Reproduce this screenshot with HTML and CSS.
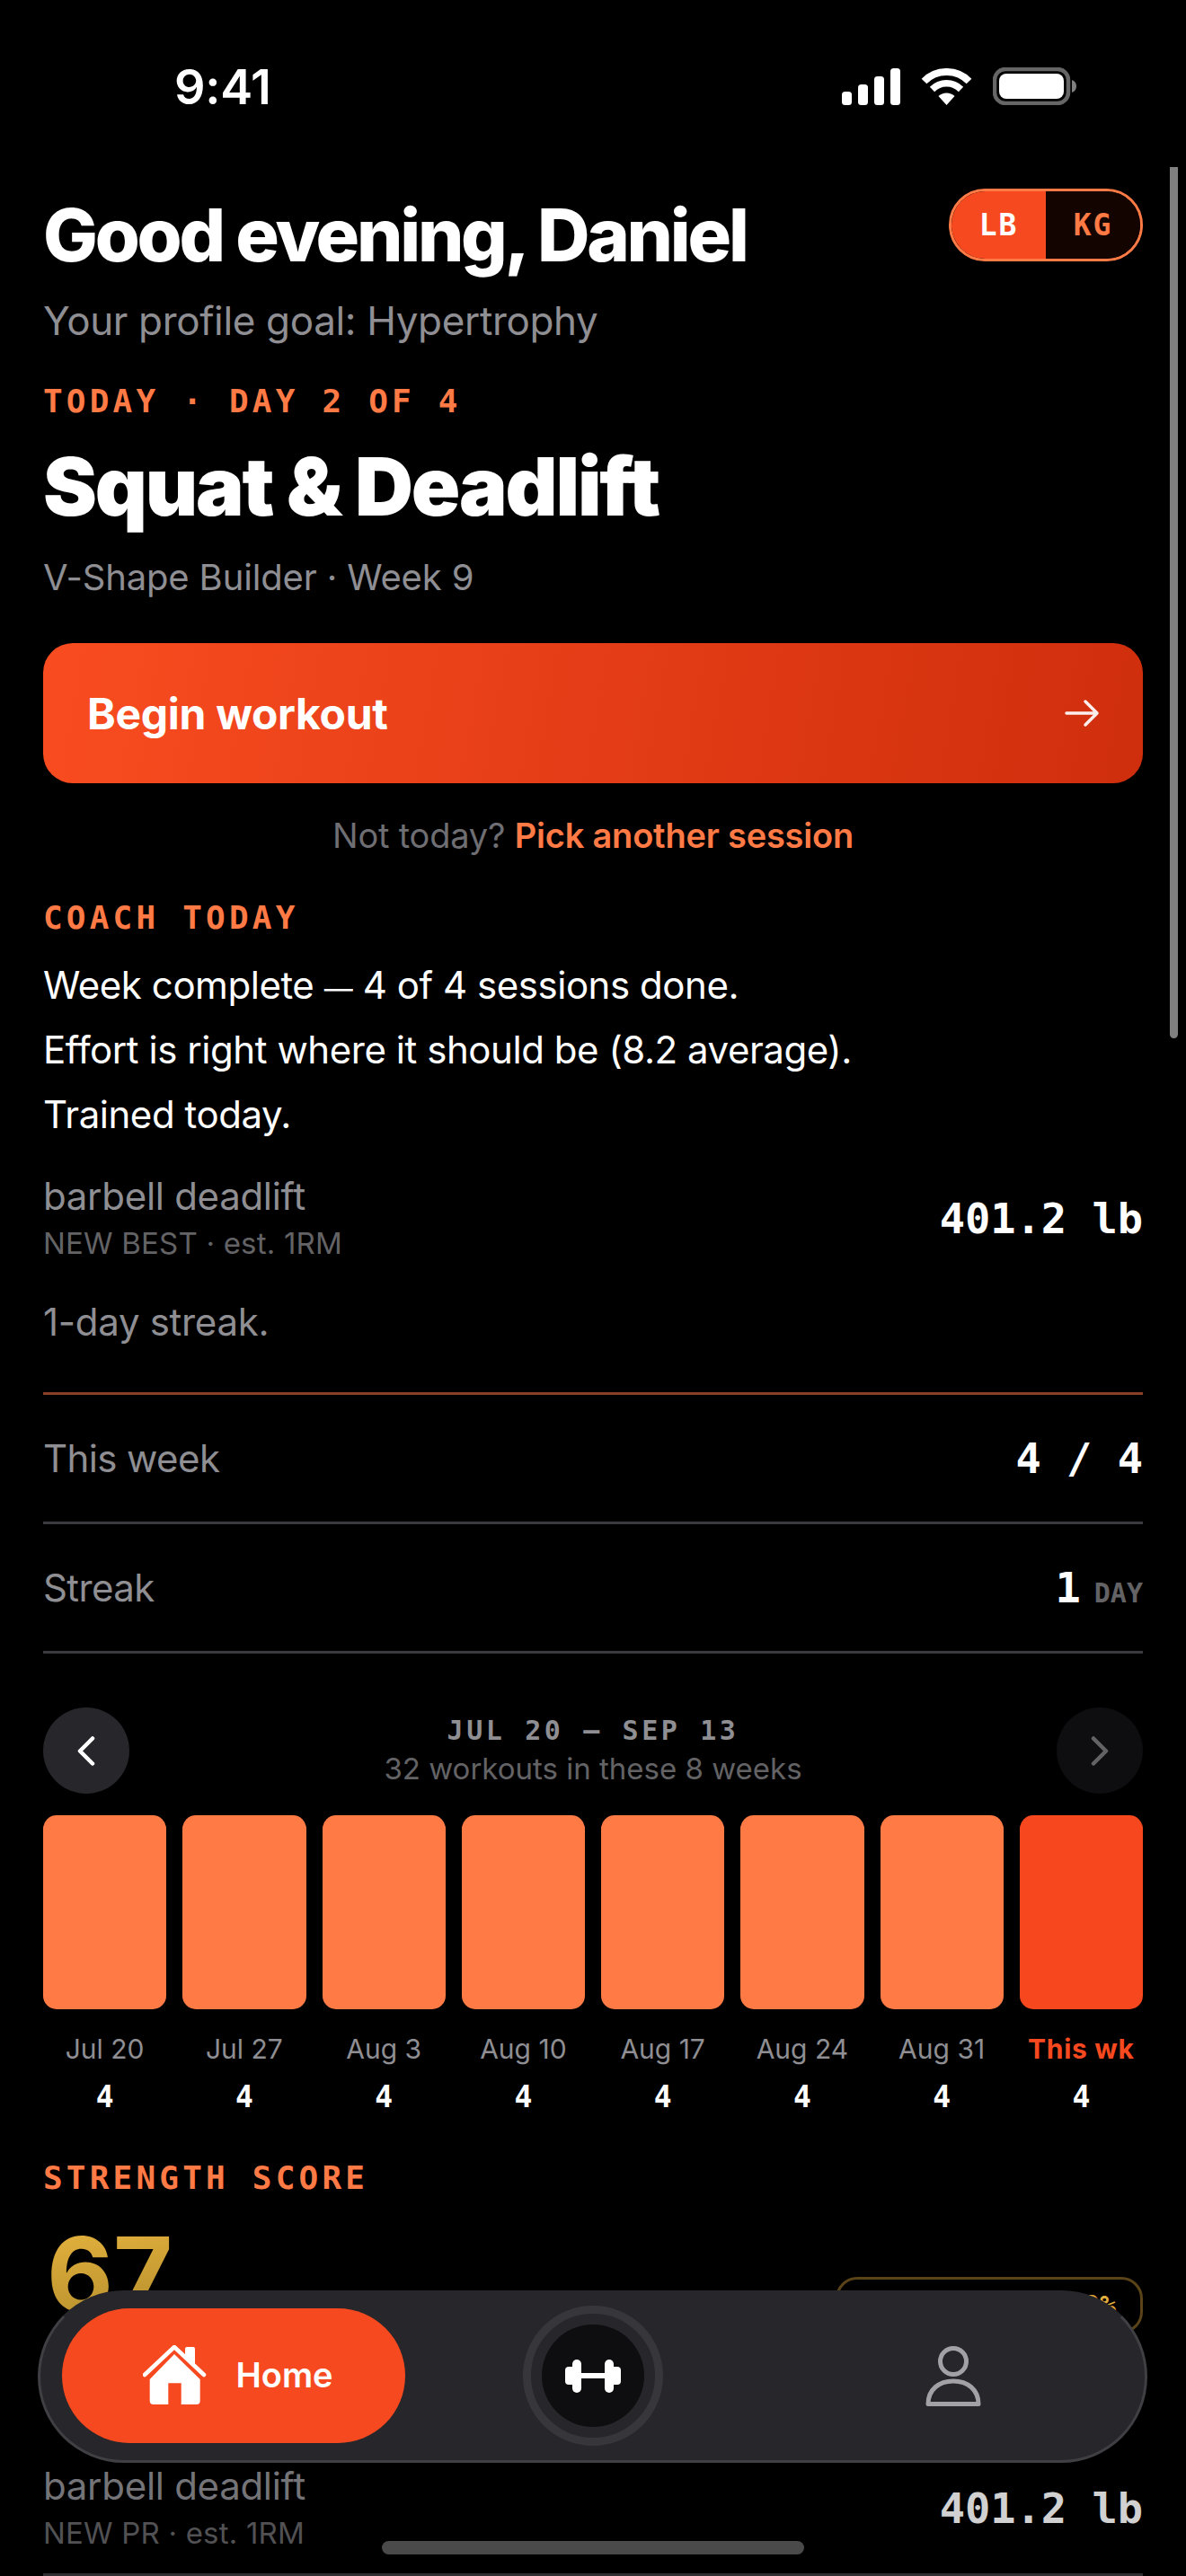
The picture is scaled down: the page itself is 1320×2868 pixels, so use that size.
FILE: index.html
```html
<!DOCTYPE html>
<html lang="en">
<head>
<meta charset="utf-8">
<title>Home</title>
<link rel="stylesheet" href="styles.css">
</head>
<body>
<div class="status">
  <span class="clock">9:41</span>
  <div class="status-icons">
    <svg class="signal" width="65" height="41" viewBox="0 0 65 41"><rect x="0" y="26" width="11" height="15" rx="3.5"/><rect x="18" y="18" width="11" height="23" rx="3.5"/><rect x="36" y="9" width="11" height="32" rx="3.5"/><rect x="54" y="0" width="11" height="41" rx="3.5"/></svg>
    <svg class="wifi" width="57" height="41" viewBox="0 0 57 41"><path d="M3.5 14.5a35 35 0 0 1 50 0" fill="none" stroke="#fff" stroke-width="8"/><path d="M12.5 23.5a22.500 22.500 0 0 1 32 0" fill="none" stroke="#fff" stroke-width="7.500"/><path d="M19.500 31a13 13 0 0 1 18 0L28.500 41z" fill="#fff"/></svg>
    <svg class="battery" width="93" height="42" viewBox="0 0 93 42"><rect x="2" y="2" width="82" height="38" rx="12" fill="none" stroke="#666" stroke-width="4.500"/><rect x="7" y="7" width="72" height="28" rx="8" fill="#fff"/><path d="M88 14c3 1 5 3.500 5 7s-2 6-5 7z" fill="#808080"/></svg>
  </div>
</div>

<main class="page">
  <header class="hero">
    <div class="hero-top">
      <div>
        <h1 class="greeting">Good evening, Daniel</h1>
        <p class="goal">Your profile goal: Hypertrophy</p>
      </div>
      <div class="units"><span class="unit unit-on">LB</span><span class="unit unit-off">KG</span></div>
    </div>
    <p class="eyebrow today">TODAY · DAY 2 OF 4</p>
    <h2 class="session">Squat &amp; Deadlift</h2>
    <p class="program">V-Shape Builder · Week 9</p>
  </header>

  <button class="begin"><span>Begin workout</span>
    <svg width="40" height="32" viewBox="0 0 40 32"><path d="M3 16h34M24 3l13 13-13 13" fill="none" stroke="#fff" stroke-opacity=".92" stroke-width="3.500" stroke-linecap="round" stroke-linejoin="round"/></svg>
  </button>
  <p class="alt">Not today? <a class="alt-link">Pick another session</a></p>

  <section class="coach">
    <p class="eyebrow">COACH TODAY</p>
    <p class="coach-line first">Week complete <span class="dash">—</span> 4 of 4 sessions done.</p>
    <p class="coach-line">Effort is right where it should be (8.2 average).</p>
    <p class="coach-line">Trained today.</p>
    <div class="pr-row coach-pr">
      <div><p class="pr-name">barbell deadlift</p><p class="pr-sub">NEW BEST · est. 1RM</p></div>
      <span class="pr-val">401.2 lb</span>
    </div>
    <p class="streak-note">1-day streak.</p>
  </section>

  <div class="stat stat-accent"><span class="stat-label">This week</span><span class="stat-val">4 / 4</span></div>
  <div class="stat"><span class="stat-label">Streak</span><span class="stat-val">1<small class="stat-unit">DAY</small></span></div>

  <section class="history">
    <div class="hist-nav">
      <button class="round"><svg width="20" height="33" viewBox="0 0 20 33"><path d="M17 2.500 3 16.500l14 14" fill="none" stroke="#fff" stroke-width="4.500" stroke-linecap="round" stroke-linejoin="round"/></svg></button>
      <div class="hist-title"><p class="range">JUL 20 — SEP 13</p><p class="range-sub">32 workouts in these 8 weeks</p></div>
      <button class="round round-off"><svg width="20" height="33" viewBox="0 0 20 33"><path d="m3 2.500 14 14-14 14" fill="none" stroke="#636366" stroke-width="4.500" stroke-linecap="round" stroke-linejoin="round"/></svg></button>
    </div>
    <div class="bars">
      <div class="col"><div class="bar"></div><span class="wk">Jul 20</span><span class="cnt">4</span></div>
      <div class="col"><div class="bar"></div><span class="wk">Jul 27</span><span class="cnt">4</span></div>
      <div class="col"><div class="bar"></div><span class="wk">Aug 3</span><span class="cnt">4</span></div>
      <div class="col"><div class="bar"></div><span class="wk">Aug 10</span><span class="cnt">4</span></div>
      <div class="col"><div class="bar"></div><span class="wk">Aug 17</span><span class="cnt">4</span></div>
      <div class="col"><div class="bar"></div><span class="wk">Aug 24</span><span class="cnt">4</span></div>
      <div class="col"><div class="bar"></div><span class="wk">Aug 31</span><span class="cnt">4</span></div>
      <div class="col"><div class="bar bar-now"></div><span class="wk wk-now">This wk</span><span class="cnt">4</span></div>
    </div>
  </section>

  <section class="strength">
    <p class="eyebrow">STRENGTH SCORE</p>
    <div class="score-row">
      <span class="score">67</span>
      <span class="score-badge">TOP 33%</span>
    </div>
    <div class="pr-row">
      <div><p class="pr-name">barbell deadlift</p><p class="pr-sub">NEW PR · est. 1RM</p></div>
      <span class="pr-val">401.2 lb</span>
    </div>
    <div class="rule"></div>
  </section>
</main>

<div class="fade"></div>
<div class="scrollbar"></div>

<nav class="tabbar">
  <a class="tab-home">
    <svg width="72" height="68" viewBox="0 0 72 68"><path d="M2 33 35 2l33 31" fill="none" stroke="#fff" stroke-width="4.500" stroke-linecap="round" stroke-linejoin="round"/><path d="M47 4a2 2 0 0 1 2-2h7a2 2 0 0 1 2 2v17L47 11z" fill="#fff"/><path d="M7.700 38 35 10l28.700 28v24a4 4 0 0 1-4 4H42.700V42.300H28.300V66H11.700a4 4 0 0 1-4-4z" fill="#fff"/></svg>
    <span class="tab-text">Home</span>
  </a>
  <a class="tab-lift"><span class="lift-core">
    <svg width="62" height="37" viewBox="0 0 62 37"><rect x="0" y="8" width="12" height="20" rx="4" fill="#fff"/><rect x="8" y="0" width="10" height="37" rx="5" fill="#fff"/><rect x="16" y="15" width="30" height="6" fill="#fff"/><rect x="44" y="0" width="10" height="37" rx="5" fill="#fff"/><rect x="50" y="8" width="12" height="20" rx="4" fill="#fff"/></svg>
  </span></a>
  <a class="tab-me">
    <svg width="62" height="67" viewBox="0 0 62 67"><circle cx="31" cy="17" r="14.500" fill="none" stroke="#a1a1a6" stroke-width="5"/><path d="M3 64.500c0-16 12-25.500 28-25.500s28 9.500 28 25.500z" fill="none" stroke="#a1a1a6" stroke-width="5" stroke-linejoin="round"/></svg>
  </a>
</nav>
<div class="indicator"></div>
</body>
</html>
```

FILE: styles.css
```css
* { box-sizing: border-box; margin: 0; padding: 0; }
html, body { background: #000; }
body {
  width: 1320px;
  height: 2868px;
  overflow: hidden;
  position: relative;
  font-family: Inter, "Liberation Sans", sans-serif;
  color: #fff;
}
p, h1, h2 { font-weight: inherit; }
a { display: block; }
button { border: 0; font: inherit; color: inherit; }

.status {
  position: absolute;
  top: 0; left: 0; right: 0;
  height: 186px;
  z-index: 3;
}
.clock {
  position: absolute;
  left: 194px; top: 66px;
  font-size: 54px; line-height: 62px; font-weight: 600; letter-spacing: -.3px;
}
.status-icons { position: absolute; left: 937px; top: 75px; display: flex; align-items: flex-start; }
.signal { fill: #fff; margin-top: 1px; margin-right: 23px; }
.wifi { margin-top: 1px; margin-right: 23px; }

.page { padding: 186px 48px 0; display: flex; flex-direction: column; }

.hero-top { display: flex; justify-content: space-between; align-items: flex-start; }
.greeting {
  font-size: 81px; line-height: 96px; font-weight: 800; letter-spacing: -3.25px;
  margin-top: 28px;
}
.goal { font-size: 44px; line-height: 60px; letter-spacing: -.35px; color: #8e8e93; margin-top: 17px; }
.units {
  display: flex; width: 216px; height: 81px; margin-top: 24px;
  border: 3px solid #ff7a45; border-radius: 41px; overflow: hidden;
  font-family: "DejaVu Sans Mono", monospace; font-weight: 700; font-size: 33px;
}
.unit { flex: 1; display: flex; align-items: center; justify-content: center; letter-spacing: 2px; }
.unit-on { background: #f7491f; color: #fff; }
.unit-off { background: #140400; color: #ff7a45; }

.eyebrow {
  font-family: "DejaVu Sans Mono", monospace; font-weight: 700;
  font-size: 36px; line-height: 44px; letter-spacing: 4.2px; color: #ff7a45;
}
.today { margin-top: 38px; }
.session { font-size: 90px; line-height: 100px; font-weight: 900; letter-spacing: -2.2px; margin-top: 23px; }
.program { font-size: 40px; line-height: 56px; letter-spacing: -.15px; color: #8e8e93; margin-top: 23px; }

.begin {
  margin-top: 45px; height: 156px; width: 100%;
  padding: 0 48px 0 49px;
  display: flex; align-items: center; justify-content: space-between;
  border-radius: 33px;
  background: linear-gradient(100deg, #f94c20, #cf2e0d);
  font-size: 48px; font-weight: 700; letter-spacing: -.3px;
}
.alt { text-align: center; font-size: 38px; line-height: 50px; letter-spacing: -.2px; color: #6e6e73; margin-top: 33px; }
.alt-link { display: inline; color: #ff7a45; font-weight: 600; }

.coach { margin-top: 45px; }
.coach-line { font-size: 42px; line-height: 72px; letter-spacing: -.45px; }
.coach-line.first { margin-top: 17px; }
.dash { font-size: 32px; line-height: 1; }
.pr-row { display: flex; justify-content: space-between; align-items: center; }
.coach-pr { margin-top: 27px; }
.pr-name { font-size: 42px; line-height: 56px; letter-spacing: -.3px; color: #8e8e93; }
.pr-sub { font-size: 33px; line-height: 42px; letter-spacing: .2px; color: #636366; margin-top: 3px; }
.pr-val { font-family: "DejaVu Sans Mono", monospace; font-weight: 700; font-size: 47px; margin-top: 3px; }
.streak-note { font-size: 42px; line-height: 56px; letter-spacing: -.3px; color: #8e8e93; margin-top: 39px; }

.stat {
  display: flex; justify-content: space-between; align-items: center;
  height: 144px;
  border-bottom: 3px solid #3a3a3f;
}
.stat-accent { margin-top: 50px; border-top: 3px solid #8a3f28; height: 147px; }
.stat-label { font-size: 42px; letter-spacing: -.6px; color: #8e8e93; }
.stat-val { font-family: "DejaVu Sans Mono", monospace; font-weight: 700; font-size: 47px; }
.stat-unit { font-size: 30px; color: #636366; margin-left: 15px; }

.history { margin-top: 60px; }
.hist-nav { display: flex; justify-content: space-between; align-items: center; }
.round { width: 96px; height: 96px; border-radius: 50%; background: #26262b; display: flex; align-items: center; justify-content: center; }
.round-off { background: #0e0e10; }
.hist-title { text-align: center; }
.range { font-family: "DejaVu Sans Mono", monospace; font-weight: 700; font-size: 30px; line-height: 40px; letter-spacing: 3.6px; color: #8e8e93; }
.range-sub { font-size: 33px; line-height: 44px; color: #636366; }
.bars { display: flex; gap: 18px; margin-top: 24px; }
.col { flex: 1; display: flex; flex-direction: column; align-items: center; }
.bar { width: 100%; height: 216px; border-radius: 15px; background: #ff7a45; }
.bar-now { background: #f7471e; }
.wk { font-size: 30px; line-height: 40px; color: #8e8e93; margin-top: 24px; }
.wk-now { color: #f7491f; font-weight: 700; letter-spacing: .7px; }
.cnt { font-family: "DejaVu Sans Mono", monospace; font-weight: 700; font-size: 33px; line-height: 40px; margin-top: 14px; }

.strength { margin-top: 48px; }
.score-row { display: flex; justify-content: space-between; align-items: flex-start; height: 268px; margin-top: 25px; }
.score {
  font-weight: 700; font-size: 114px; line-height: 120px; margin-left: 4px;
  background: linear-gradient(170deg, #e8b53f, #b08a2b);
  -webkit-background-clip: text; background-clip: text; color: transparent;
}
.score-badge {
  width: 342px; height: 63px; margin-top: 63px;
  border: 3px solid #5a4318; border-radius: 24px;
  display: flex; align-items: center; justify-content: flex-end; padding-right: 27px;
  font-family: "DejaVu Sans Mono", monospace; font-weight: 700; font-size: 30px; color: #e0ae3c;
}
.rule { height: 3px; background: #3a3a3f; margin-top: 24px; }

.fade {
  position: absolute; left: 0; right: 0; bottom: 0; height: 130px;
  background: rgba(0,0,0,.18);
}
.scrollbar {
  position: absolute; left: 1302px; top: 186px; width: 9px; height: 970px;
  background: #808080; border-radius: 0 0 5px 5px;
}
.tabbar {
  position: absolute; left: 42px; top: 2550px; width: 1235px; height: 192px;
  border-radius: 96px; background: #26262b;
  border: 3px solid #3f3f44; border-top-color: #26262b;
  padding-bottom: 2px;
  display: flex; align-items: center;
}
.tab-home {
  width: 382px; height: 150px; margin-left: 24px; border-radius: 75px; background: #f7491f;
  padding-left: 10px;
  display: flex; align-items: center; justify-content: center; gap: 31px;
  font-size: 38px; font-weight: 600;
}
.tab-text { margin-bottom: 3px; }
.tab-lift {
  width: 156px; height: 156px; margin-left: 131px; border-radius: 50%;
  border: 9px solid #36363b;
  display: flex; align-items: center; justify-content: center;
}
.lift-core { width: 114px; height: 114px; border-radius: 50%; background: #0e0e10; display: flex; align-items: center; justify-content: center; }
.tab-me { margin-left: 292px; display: flex; }
.indicator {
  position: absolute; left: 425px; top: 2829px; width: 470px; height: 15px;
  border-radius: 8px; background: #4a4a4a;
}
```
